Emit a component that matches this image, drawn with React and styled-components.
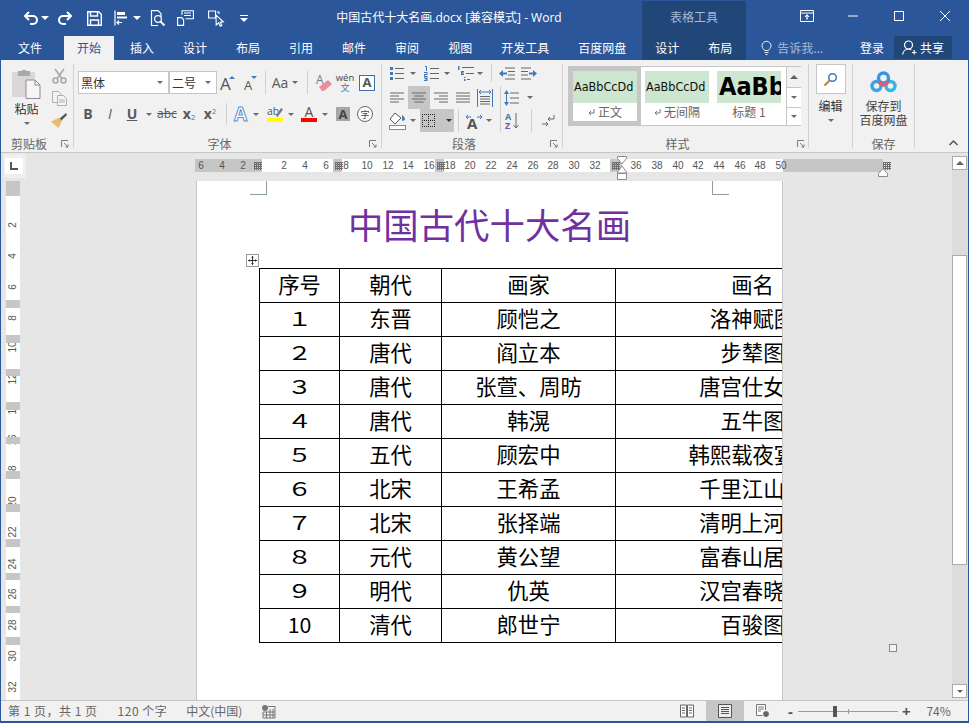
import React from "react";
import styled, { createGlobalStyle } from "styled-components";

const UI = `"Open Sans","Noto Sans CJK SC",sans-serif`;
const CJK = `"Noto Sans CJK SC","Noto Sans",sans-serif`;
const BLUE = "#2b579a";
const DARK = "#214779";
const GREY = "#444";
const ICON = "#5a5a5a";
const ACC = "#3f7ab8";

const Global = createGlobalStyle`
  html, body { margin: 0; padding: 0; background: ${BLUE}; }
  * { box-sizing: border-box; }
  svg { overflow: visible; }
`;

const Window = styled.div`
  width: 969px; height: 723px; display: flex; flex-direction: column; overflow: hidden;
  border-left: 1px solid ${BLUE}; border-right: 1px solid ${BLUE}; border-bottom: 2px solid ${BLUE};
  font-family: ${CJK}; color: ${GREY}; background: #e6e6e6;
`;
/* ---------- title bar ---------- */
const TitleBar = styled.header`
  height: 36px; background: ${BLUE}; display: grid; grid-template-columns: 641px 104px 1fr; color: #fff;
`;
const TitleLeft = styled.div`display: flex; align-items: center;`;
const Qat = styled.div`width: 255px; flex: none; display: flex; align-items: center; padding-left: 20px; height: 32px;`;
const QatItem = styled.span`
  width: ${p => p.$w}px; margin-left: ${p => p.$ml || 0}px; flex: none; display: flex; justify-content: center; align-items: center;
`;
const TitleText = styled.div`flex: 1; text-align: center; font: 12px/32px ${UI}; white-space: nowrap; color: #fff; height: 32px;`;
const ContextTitle = styled.div`
  margin-top: 1px; background: ${DARK}; color: #a6b8d3; font: 12px/31px ${CJK}; text-align: center;
`;
const WinButtons = styled.div`display: flex; justify-content: flex-end;`;
const WinButton = styled.span`width: 46px; height: 32px; display: flex; align-items: center; justify-content: center;`;
/* ---------- tabs ---------- */
const TabRow = styled.nav`height: 24px; background: ${BLUE}; display: flex; padding-left: 4px; color: #fff;`;
const Tab = styled.span`
  padding: 0 13px; margin-right: ${p => p.$mr ?? 3}px; font: 12px/23px ${CJK};
  color: ${p => (p.$active ? BLUE : "#fff")}; background: ${p => (p.$active ? "#f1f1f1" : "transparent")};
`;
const ContextTabs = styled.div`display: flex; background: ${DARK}; width: 104px; flex: none;`;
const CtxTab = styled(Tab)`margin-right: ${p => p.$mr || 0}px;`;
const Tell = styled.div`display: flex; align-items: center; gap: 5px; margin-left: 15px; font: 12px/24px ${CJK}; color: #a9bcd7;`;
const Login = styled.span`margin-left: auto; margin-right: 10px; font: 12px/23px ${CJK}; color: #fff;`;
const Share = styled.div`
  width: 58px; height: 23px; margin-right: 16px; background: ${DARK}; display: flex; align-items: center; gap: 3px;
  padding-left: 8px; font: 12px/23px ${CJK}; color: #fff;
`;
/* ---------- ribbon ---------- */
const Ribbon = styled.section`
  height: 93px; background: #f1f1f1; border-bottom: 1px solid #c6c6c6; padding: 4px 0; display: flex; flex: none;
`;
const Group = styled.div`
  width: ${p => p.$w}px; height: 84px; flex: none; border-right: 1px solid #d2d2d2; display: flex; flex-direction: column;
`;
const GroupBody = styled.div`height: 68px; flex: none;`;
const GroupLabel = styled.div`
  height: 16px; padding-top: 8px; display: grid; grid-template-columns: ${p => (p.$solo ? "1fr" : "1fr 16px")}; align-items: center;
  font: 12px/8px ${CJK}; color: #666; text-align: center;
`;
const LabelText = styled.span`white-space: nowrap;`;
const Launcher = styled.span`justify-self: end; margin-right: ${p => p.$mr ?? 4}px; display: flex;`;
const ClipBody = styled(GroupBody)`display: flex;`;
const PasteCol = styled.div`
  width: 49px; display: flex; flex-direction: column; align-items: center; padding: 4px 0 0 0; margin-left: 1px; font: 12px/16px ${CJK}; color: #333;
`;
const PasteText = styled.span`margin-top: 2px;`;
const PasteCaret = styled.span`margin-top: 5px; display: flex;`;
const ClipTools = styled.div`width: 18px; margin-left: -1px; display: flex; flex-direction: column; align-items: center; padding-top: 1px;`;
const ClipTool = styled.span`height: 24.5px; display: flex; align-items: center;`;
const FontBody = styled(GroupBody)`padding: 7px 0 0 4px; display: flex; flex-direction: column; gap: 9px;`;
const ParaBody = styled(GroupBody)`padding-left: 4px; display: flex; flex-direction: column;`;
const Row = styled.div`display: flex; align-items: stretch; height: ${p => p.$h}px; margin-top: ${p => p.$mt || 0}px;`;
const Tool = styled.span`
  width: ${p => p.$w}px; margin-left: ${p => p.$ml || 0}px; flex: none; display: flex; align-items: center; justify-content: center;
  background: ${p => (p.$on ? "#c6c6c6" : "transparent")};
`;
const Sep = styled.span`
  width: 1px; margin: 0 ${p => p.$mr || 0}px 0 ${p => p.$ml || 0}px; background: #cfcfcf; flex: none;
`;
const Caret = styled.i`
  display: block; width: 0; height: 0; border-left: 3.5px solid transparent; border-right: 3.5px solid transparent;
  border-top: 3.5px solid ${p => p.$c || "#6a6a6a"};
`;
const Combo = styled.div`
  width: ${p => p.$w}px; margin-left: ${p => p.$ml || 0}px; height: 23px; background: #fff; border: 1px solid #c6c6c6;
  display: flex; align-items: center; justify-content: space-between; padding: 0 5px 0 2px; font: 12px/21px ${CJK}; color: #333;
`;
const Letter = styled.span`
  font-family: ${UI}; font-size: ${p => p.$s || 14}px; line-height: 1; font-weight: ${p => (p.$b ? 700 : 400)};
  font-style: ${p => (p.$i ? "italic" : "normal")}; color: ${p => p.$c || ICON};
  text-decoration: ${p => p.$d || "none"};
`;
const Sub = styled.span`font-family: ${UI}; font-size: 8px; line-height: 1; color: ${ACC}; align-self: ${p => p.$a};`;
const Pair = styled.span`display: flex; align-items: center; height: 14px;`;
const BoxA = styled.span`
  width: 16px; height: 16px; border: 1px solid #3f6fa8; display: flex; align-items: center; justify-content: center;
  font: 700 13px/1 ${UI}; color: #555; background: #fff;
`;
const ShadedA = styled.span`
  width: 14px; height: 14px; background: #a6a6a6; display: flex; align-items: center; justify-content: center;
  font: 700 13px/1 ${UI}; color: #444;
`;
const Circled = styled.span`
  width: 16px; height: 16px; border-radius: 50%; border: 1px solid #666; display: flex; align-items: center; justify-content: center;
  font: 9px/1 ${CJK}; color: #444; background: #fff;
`;
const WenStack = styled.span`display: flex; flex-direction: column; align-items: center; font-family: ${UI}; line-height: 1;`;
const WenTop = styled.span`font-size: 9.5px; line-height: 10px; color: #444;`;
const WenBottom = styled.span`font: 9px/9px ${CJK}; color: ${ACC};`;
const BarA = styled.span`display: flex; flex-direction: column; align-items: center; font: 400 14px/12px ${UI}; color: #555;`;
const ColorBar = styled.span`width: 16px; height: 4px; background: ${p => p.$c};`;
const StyleBody = styled(GroupBody)`padding: 2px 0 0 5px;`;
const Gallery = styled.div`
  width: 233px; height: 60px; border: 1px solid #c6c6c6; background: #fff; display: flex;
`;
const StyleItem = styled.div`
  width: 72px; height: 58px; padding: 4px 4px 0; display: flex; flex-direction: column; flex: none;
  outline: ${p => (p.$on ? "4px solid #c6c6c6" : "none")}; outline-offset: -4px;
`;
const Swatch = styled.div`
  height: 32px; background: #cde6d0; overflow: hidden; white-space: nowrap; padding-left: ${p => (p.$big ? 2 : 1)}px;
  font: ${p => (p.$big ? "700 25px/32px" : "400 12.5px/32px")} "DejaVu Sans Condensed","Noto Sans",sans-serif; color: ${p => (p.$big ? "#000" : "#111")};
`;
const StyleCap = styled.div`
  display: flex; justify-content: center; align-items: center; gap: 3px; font: 12px/18px ${CJK}; color: #666; white-space: nowrap;
`;
const GalleryScroll = styled.div`width: 15px; margin-left: 1px; display: flex; flex-direction: column; flex: none;`;
const ScrollStep = styled.span`
  height: ${p => p.$h}px; border-left: 1px solid #c6c6c6; border-bottom: ${p => (p.$last ? "none" : "1px solid #c6c6c6")};
  background: ${p => p.$bg || "#fff"}; display: flex; align-items: center; justify-content: center;
`;
const EditBody = styled(GroupBody)`display: flex; flex-direction: column; align-items: center; font: 12px/16px ${CJK}; color: #333;`;
const EditBtn = styled.span`
  width: 30px; height: 30px; background: #fff; border: 1px solid #c6c6c6; display: flex; align-items: center; justify-content: center; margin-bottom: 4px;
`;
const EditCaret = styled.span`margin-top: 5px;`;
const SaveBody = styled(GroupBody)`
  display: flex; flex-direction: column; align-items: center; padding-top: 7px; font: 12px/14px ${CJK}; color: #444; text-align: center;
`;
const SaveText = styled.span`margin-top: 6px;`;
const Collapse = styled.div`flex: 1; display: flex; justify-content: flex-end; align-items: flex-end; padding: 0 10px 2px 0;`;
/* ---------- workspace ---------- */
const Workspace = styled.main`height: 547px; flex: none; display: flex;`;
const Rail = styled.aside`width: 25px; flex: none; display: flex; flex-direction: column;`;
const Corner = styled.div`
  width: 22px; height: 24px; margin: 1px 0 3px 3px; background: #efefef; padding: 4px 3px 4px 1px;
`;
const CornerBtn = styled.div`
  width: 18px; height: 16px; background: #fff; display: flex; align-items: center; justify-content: center;
`;
const VRuler = styled.div`
  width: 14px; height: 519px; margin-left: 5px; background: #fff; position: relative; overflow: hidden;
`;
const VBand = styled.div`position: absolute; left: 0; width: 14px; height: 7px; background: #c6c6c6;`;
const VLabel = styled.span`
  position: absolute; left: 7px; font: 10px/10px "Liberation Sans",sans-serif; color: #555; transform: translate(-50%,-50%) rotate(-90deg); white-space: nowrap;
`;
const Center = styled.div`flex: 1; min-width: 0; display: flex; flex-direction: column;`;
const RulerRow = styled.div`height: 28px; flex: none; padding: 6px 0 0 169px;`;
const HRuler = styled.div`width: 688px; height: 13px; background: #fff; position: relative;`;
const HBand = styled.div`position: absolute; top: 0; height: 13px; background: #c6c6c6;`;
const HTick = styled.span`
  position: absolute; top: 1px; font: 10px/11px "Liberation Sans",sans-serif; color: #555; transform: translateX(-50%);
`;
const GridMark = styled.svg`position: absolute; top: 3px;`;
const Stops = styled.svg`position: absolute; top: -3px;`;
const Doc = styled.div`flex: 1; position: relative; padding-left: 170px; min-height: 0; overflow: hidden;`;
const Page = styled.article`
  width: 587px; height: 100%; background: #fff; border-left: 1px solid #c6c6c6; border-right: 1px solid #c6c6c6; overflow: hidden;
`;
const CropRow = styled.div`height: 14px; display: flex; justify-content: space-between; padding: 0 53px;`;
const Crop = styled.span`
  width: 17px; height: 14px; border-bottom: 1px solid #8ea193;
  border-${p => p.$side}: 1px solid #8ea193;
`;
const DocTitle = styled.h1`
  margin: 4px 0 0; height: 50px; font: 400 35.4px/50px ${CJK}; color: #7030a0; text-align: center; white-space: nowrap;
`;
const TableWrap = styled.div`position: relative; margin: 19px 0 0 62px; width: 630px;`;
const MoveHandle = styled.span`
  position: absolute; left: -13px; top: -14px; width: 13px; height: 13px; border: 1px solid #9a9a9a; background: #fff;
  display: flex; align-items: center; justify-content: center;
`;
const DataTable = styled.table`
  border-collapse: collapse; table-layout: fixed; width: 630px; font: 21.33px/24px ${CJK}; color: #000;
`;
const Cell = styled.td`
  border: 1px solid #000; height: 34px; padding: 0 0 4px; text-align: center; white-space: nowrap; overflow: hidden;
`;
const Digit = styled.span`display: inline-block; transform: scale(1.18, 0.88);`;
const ResizeHandle = styled.span`
  position: absolute; left: 863px; top: 463px; width: 8px; height: 8px; border: 1px solid #8a8a8a; background: #f4f4f4;
`;
const Scrollbar = styled.aside`width: 17px; flex: none; padding: 3px 0 2px 1px;`;
const Track = styled.div`width: 16px; height: 100%; background: #dcdcdc; display: flex; flex-direction: column;`;
const ScrollBtn = styled.span`
  width: 15px; height: 14px; flex: none; background: #fff; border: 1px solid #ababab; display: flex; align-items: center; justify-content: center;
`;
const Thumb = styled.div`width: 15px; height: 310px; margin-top: 85px; background: #fff; border: 1px solid #ababab; margin-bottom: auto;`;
const UpCaret = styled.i`
  display: block; width: 0; height: 0; border-left: 4px solid transparent; border-right: 4px solid transparent; border-bottom: 4px solid #606060;
`;
/* ---------- status bar ---------- */
const Status = styled.footer`
  height: 21px; flex: none; background: #f1f1f1; border-top: 1px solid #c6c6c6; display: flex; align-items: center; font: 12px/20px ${CJK}; color: #666;
`;
const StatusText = styled.span`margin-left: ${p => p.$ml}px; white-space: nowrap; letter-spacing: ${p => p.$ls || 0}px;`;
const StatusIcon = styled.span`margin-left: ${p => p.$ml}px; display: flex;`;
const ViewBtn = styled.span`
  width: ${p => p.$w}px; height: 20px; margin-left: ${p => p.$ml || 0}px; display: flex; align-items: center; justify-content: center;
  background: ${p => (p.$on ? "#c6c6c6" : "transparent")};
`;
const Zoom = styled.div`display: flex; align-items: center; margin-left: ${p => p.$ml}px;`;
const ZoomSign = styled.span`font: 700 15px/15px ${UI}; color: #555; width: 10px; text-align: center;`;
const Slider = styled.div`
  width: 100px; height: 1px; margin: 0 3px; background: #9a9a9a; position: relative;
`;
const SliderThumb = styled.i`position: absolute; left: 35px; top: -5px; width: 4px; height: 11px; background: #555;`;
const SliderMid = styled.i`position: absolute; left: 50px; top: -2px; width: 1px; height: 5px; background: #9a9a9a;`;

/* ---------- icons ---------- */
const W = { fill: "none", stroke: "#fff", strokeWidth: 1.6 };
const Undo = ({ flip }) => (
  <svg width="16" height="14" viewBox="0 0 16 14" {...W} strokeWidth="2" style={flip ? { transform: "scaleX(-1)" } : undefined}>
    <path d="M6 1 2 5l4 4M2 5h8a3.6 3.6 0 0 1 0 8H7" />
  </svg>
);
const SaveIc = () => (
  <svg width="15" height="15" viewBox="0 0 15 15" {...W} strokeWidth="1.4">
    <path d="M.7.7h11l2.6 2.6v11H.7z" /><path d="M3.5 1v4h7V1M3.5 14V9h8v5" />
  </svg>
);
const TouchIc = () => (
  <svg width="14" height="16" viewBox="0 0 14 16" {...W} strokeWidth="1.2">
    <path d="M1 .5v15" /><path fill="#fff" stroke="none" d="M3 2h8v3H3zM3 6.5h10v2H3z" /><path d="M8 12.5H3m2-2-2 2 2 2" />
  </svg>
);
const PreviewIc = () => (
  <svg width="16" height="17" viewBox="0 0 16 17" {...W} strokeWidth="1.2">
    <path d="M8 15.5H1.5V.7h6.5l3 3v3" /><circle cx="8" cy="9" r="3.4" /><path d="m10.5 11.5 4 4" strokeWidth="1.8" />
  </svg>
);
const NewIc = () => (
  <svg width="17" height="16" viewBox="0 0 17 16" {...W} strokeWidth="1.1">
    <path d="M.6 7.6h4l2 2v5.8h-6z" /><path d="M5 5V.7h11.4v8H8.6" /><path d="M7 3h7M7 5.5h7" />
  </svg>
);
const PointerIc = () => (
  <svg width="17" height="17" viewBox="0 0 17 17" {...W} strokeWidth="1.1">
    <path d="M.6 1h7v7h-7zM9 2h2v2" /><path fill={BLUE} d="m8 5 .2 10 2.4-2.2 1.6 3.4 1.6-.7-1.6-3.4 3.1-.3z" />
  </svg>
);
const CustomIc = () => (
  <svg width="8" height="8" viewBox="0 0 8 8"><path d="M0 1h8v1H0z" fill="#fff" /><path d="M0 4h8L4 8z" fill="#fff" /></svg>
);
const ChromeDown = () => <svg width="8" height="5" viewBox="0 0 8 5"><path d="M0 0h8L4 4z" fill="#fff" /></svg>;
const RibbonDisp = () => (
  <svg width="14" height="12" viewBox="0 0 14 12" {...W} strokeWidth="1"><path d="M.5.5h13v11H.5zM.5 3h13" /><path fill="#fff" stroke="none" d="M7 4 4.5 7h5zM6.3 6.5h1.4v3H6.3z" /></svg>
);
const MinIc = () => <svg width="10" height="10" viewBox="0 0 10 10"><path d="M0 5h10" stroke="#fff" /></svg>;
const MaxIc = () => <svg width="10" height="10" viewBox="0 0 10 10"><path d="M.5.5h9v9h-9z" stroke="#fff" fill="none" /></svg>;
const CloseIc = () => <svg width="10" height="10" viewBox="0 0 10 10"><path d="m0 0 10 10M10 0 0 10" stroke="#fff" /></svg>;
const Bulb = () => (
  <svg width="11" height="14" viewBox="0 0 11 14" fill="none" stroke="#e8edf4"><path d="M3.5 9.5C2.8 8 1 7 1 4.8a4.5 4.5 0 0 1 9 0C10 7 8.2 8 7.5 9.5zM3.5 11.5h4M4.5 13.5h2" /></svg>
);
const Person = () => (
  <svg width="15" height="15" viewBox="0 0 15 15" fill="none" stroke="#fff" strokeWidth="1.2"><circle cx="6.5" cy="5" r="4" /><path d="M.7 14.5c.3-3 2.7-5.5 5.8-5.5 1 0 2 .3 2.8.7M10 12.5h4.5M12.2 10v4.5" /></svg>
);
const Launch = () => (
  <svg width="8" height="8" viewBox="0 0 8 8" fill="none" stroke="#7a7a7a"><path d="M.5 7V.5H7" /><path d="m3 3 4 4M7 4.5V7H4.5" /></svg>
);
const PasteIc = () => (
  <svg width="29" height="31" viewBox="0 0 29 31">
    <rect x="0" y="4" width="23" height="25" rx="1" fill="#d9d5d9" />
    <path d="M6 8V3h3.5a3 3 0 0 1 5 0H18v5z" fill="#a8a8a8" />
    <path d="M14 12h9l5 5v13.5H14z" fill="#f6f4f6" stroke="#8e8e8e" /><path d="M23 12v5h5" fill="none" stroke="#8e8e8e" />
  </svg>
);
const CutIc = () => (
  <svg width="15" height="16" viewBox="0 0 15 16" fill="none" stroke="#a6a6a6" strokeWidth="1.5"><path d="m3 1 6.5 9M12 1 5.5 10" /><circle cx="3.5" cy="12.5" r="2.5" /><circle cx="11.5" cy="12.5" r="2.5" /></svg>
);
const CopyIc = () => (
  <svg width="15" height="15" viewBox="0 0 15 15" fill="#f4f4f4" stroke="#b0b0b0"><path d="M.5.5h6l2 2v9h-8z" /><path d="M5.5 4.5h6l3 3v7h-9z" /><path d="M7 9h6M7 11h6" /></svg>
);
const BrushIc = () => (
  <svg width="16" height="15" viewBox="0 0 16 15"><path d="M15 0l1 2-6 6-2-2z" fill="#555" /><path d="M8 4.5 11 8l-3.500 7L0 8.800z" fill="#e9bb73" /></svg>
);
const Grow = ({ small }) => (
  <svg width="18" height="18" viewBox="0 0 18 18">
    <text x={small ? 3 : 1} y="16" fontFamily="Open Sans" fontSize={small ? 13 : 17} fill="#555">A</text>
    <path d={small ? "M10 2h6l-3 3z" : "M10 5l3-3 3 3z"} fill={ACC} />
  </svg>
);
const Eraser = () => (
  <svg width="16" height="18" viewBox="0 0 16 18">
    <text x="0" y="10" fontFamily="Open Sans" fontSize="12" fill="#777">A</text>
    <path d="M3 13l9-7 4 4-8 7H6z" fill="#ea8d9b" />
  </svg>
);
const EffectA = () => (
  <svg width="18" height="18" viewBox="0 0 18 18">
    <text x="1" y="16" fontFamily="Open Sans" fontWeight="700" fontSize="19" fill="#fff" stroke="#5a93cd" strokeWidth="1">A</text>
  </svg>
);
const Highlight = () => (
  <svg width="16" height="18" viewBox="0 0 16 18">
    <text x="0" y="10" fontFamily="Open Sans" fontSize="10.5" fill="#555">ab</text>
    <path d="M9 11 14 3l2 1.5L10.500 12z" fill="#7a7a7a" /><rect y="13" width="16" height="4" fill="#ffff00" />
  </svg>
);
const Lines = ({ kind }) => {
  const d = {
    left: "M0 1h14M0 4h9M0 7h14M0 10h9",
    center: "M0 1h14M2.5 4h9M0 7h14M2.5 10h9",
    right: "M0 1h14M5 4h9M0 7h14M5 10h9",
    just: "M0 1h14M0 4h14M0 7h14M0 10h14",
  }[kind];
  return <svg width="14" height="11" viewBox="0 0 14 11" fill="none" stroke="#666"><path d={d} /></svg>;
};
const Bullets = () => (
  <svg width="14" height="13" viewBox="0 0 14 13"><path d="M5 1.5h9M5 6.5h9M5 11.5h9" stroke="#666" /><path d="M0 0h3v3H0zM0 5h3v3H0zM0 10h3v3H0z" fill={ACC} /></svg>
);
const Numbered = () => (
  <svg width="15" height="15" viewBox="0 0 15 15">
    <path d="M6 2.5h9M6 7.5h9M6 12.5h9" stroke="#666" />
    <path d="M1 0h2v5H2V1H1zM0 6h3.5v3H1v1h2.500v1H0V8h2.500V7H0zM0 11.500h3.500V15H0v-1h2.500v-.5H1v-1h1.500V12.500H0z" fill={ACC} />
  </svg>
);
const Multi = () => (
  <svg width="17" height="15" viewBox="0 0 17 15">
    <path d="M5 1.5h12M9 7.5h8M10 13.5h3" stroke="#666" />
    <path d="M1 0h1.500v4H1zM4 5h3v1.500H5.500v1H7V9H4zM7 11h1.500v1H7zM7 13h1.500v2H7z" fill={ACC} />
  </svg>
);
const Indent = ({ out }) => (
  <svg width="16" height="13" viewBox="0 0 16 13" style={out ? undefined : { transform: "scaleX(-1)" }}>
    <path d="M6 1h10M9 4.500h7M9 8h7M6 12h10" stroke="#666" />
    <path d="M0 6.500 4 3v2.500h4v2H4V10z" fill={ACC} />
  </svg>
);
const Distrib = () => (
  <svg width="16" height="18" viewBox="0 0 16 18">
    <path d="M.5 0v18M15.5 0v18" stroke={ACC} /><path d="M2 3h12M2 3l2-2M2 3l2 2M14 3l-2-2M14 3l-2 2" stroke={ACC} fill="none" />
    <path d="M3 7.5h10M3 10h10M3 12.5h10M3 15h10" stroke="#666" />
  </svg>
);
const LineSp = () => (
  <svg width="15" height="16" viewBox="0 0 15 16"><path d="M6 3h9M6 8h9M6 13h9" stroke="#666" /><path d="M2.5 2v12" stroke={ACC} /><path d="M0 4l2.500-4L5 4zM0 12h5l-2.500 4z" fill={ACC} /></svg>
);
const Bucket = () => (
  <svg width="17" height="18" viewBox="0 0 17 18">
    <path d="M6 1 1 7l5 5 6-6z" fill="#fff" stroke="#555" /><path d="M13 3c2 1 3 3 3 5l-3 1z" fill={ACC} />
    <rect x=".5" y="13.5" width="16" height="4" fill="#fff" stroke="#8a8a8a" />
  </svg>
);
const Borders = () => (
  <svg width="13" height="13" viewBox="0 0 13 13" fill="none" stroke="#222" strokeDasharray="1 1" shapeRendering="crispEdges"><path d="M0 .5h13M0 12.5h13M0 6.5h13M.5 0v13M6.5 0v13M12.5 0v13" /></svg>
);
const DirIc = () => (
  <svg width="20" height="16" viewBox="0 0 20 16">
    <text x="3" y="16" fontFamily="Open Sans" fontSize="15" fontWeight="700" fill="#555">A</text>
    <path d="M2 4h5M2 4l2-2M2 4l2 2" stroke={ACC} fill="none" /><path d="M18 4h-5M18 4l-2-2M18 4l-2 2" stroke={ACC} fill="none" />
  </svg>
);
const SortIc = () => (
  <svg width="14" height="18" viewBox="0 0 14 18">
    <text x="0" y="8" fontFamily="Open Sans" fontSize="9" fontWeight="700" fill={ACC}>A</text>
    <text x="0" y="17" fontFamily="Open Sans" fontSize="9" fontWeight="700" fill="#8a4bb0">Z</text>
    <path d="M11 1v15M8.5 13l2.500 3 2.500-3" stroke="#666" fill="none" />
  </svg>
);
const MarkIc = () => (
  <svg width="14" height="14" viewBox="0 0 14 14" fill="none" stroke="#666"><path d="M13 1v4H7M9 3 7 5l2 2M1 10h6M5 8l2 2-2 2" /></svg>
);
const Return = () => <svg width="7" height="7" viewBox="0 0 7 7" fill="none" stroke="#777"><path d="M6 0v4H1M3 2 1 4l2 2" /></svg>;
const Mag = () => (
  <svg width="15" height="15" viewBox="0 0 15 15" fill="none"><circle cx="9.5" cy="5.5" r="3.8" stroke={ACC} strokeWidth="1.5" /><path d="M6.5 8.5 1.5 13.5" stroke="#b5813a" strokeWidth="2" /></svg>
);
const BaiduIc = () => (
  <svg width="27" height="22" viewBox="0 0 27 22" fill="none" strokeWidth="3.4">
    <circle cx="6.5" cy="15" r="4.5" stroke="#38a4e8" /><circle cx="20.5" cy="15" r="4.5" stroke="#35b5e0" />
    <circle cx="13.5" cy="7" r="5" stroke="#3a94e4" /><path d="M9.5 10c1 3 2.500 4 4 4s3-1 4-4" stroke="#ef5568" />
  </svg>
);
const LCorner = () => <svg width="8" height="8" viewBox="0 0 8 8" fill="none" stroke="#555" strokeWidth="2"><path d="M1 0v7h7" /></svg>;
const GridGlyph = ({ style }) => (
  <GridMark width="8" height="8" viewBox="0 0 8 8" style={style} stroke="#6e6e6e" strokeWidth="1" fill="none" shapeRendering="crispEdges">
    <path d="M0 .5h8M0 2.500h8M0 4.500h8M0 6.500h8M.5 0v8M2.500 0v8M4.500 0v8M6.500 0v8" />
  </GridMark>
);
const MoveIc = () => (
  <svg width="9" height="9" viewBox="0 0 9 9" fill="none" stroke="#333"><path d="M4.5 0v9M0 4.500h9M3.500 1.500l1-1 1 1M3.500 7.500l1 1 1-1M1.500 3.500l-1 1 1 1M7.500 3.500l1 1-1 1" /></svg>
);
const BookIc = () => (
  <svg width="14" height="14" viewBox="0 0 14 14" fill="#fff" stroke="#666"><path d="M.5 1h6v12h-6zM7.500 1h6v12h-6z" /><path d="M2 4h3M2 6.500h3M2 9h3M9 4h3M9 6.500h3M9 9h3" /></svg>
);
const PrintIc = () => (
  <svg width="14" height="14" viewBox="0 0 14 14" fill="#eee" stroke="#555"><path d="M.5.5h13v13H.5z" /><path d="M3 3.500h8M3 5.500h8M3 7.500h8M3 9.500h8" /></svg>
);
const WebIc = () => (
  <svg width="14" height="14" viewBox="0 0 14 14" fill="#fff" stroke="#777"><path d="M.5.5h9v11h-9z" /><path d="M2 3h6M2 5h6M2 7h3" /><circle cx="10" cy="10" r="3.5" fill="#666" stroke="#fff" /></svg>
);
const MacroIc = () => (
  <svg width="13" height="13" viewBox="0 0 13 13"><circle cx="3" cy="3" r="3" fill="#777" /><path d="M6 1.500h7V13H1V7h12M1 10h12M4.500 7v6M8 4v9M11 4v9" stroke="#777" fill="none" /></svg>
);

/* ---------- data ---------- */
const rows = [
  ["序号", "朝代", "画家", "画名"],
  ["１", "东晋", "顾恺之", "洛神赋图"],
  ["２", "唐代", "阎立本", "步辇图"],
  ["３", "唐代", "张萱、周昉", "唐宫仕女图"],
  ["４", "唐代", "韩滉", "五牛图"],
  ["５", "五代", "顾宏中", "韩熙载夜宴图"],
  ["６", "北宋", "王希孟", "千里江山图"],
  ["７", "北宋", "张择端", "清明上河图"],
  ["８", "元代", "黄公望", "富春山居图"],
  ["９", "明代", "仇英", "汉宫春晓图"],
  ["10", "清代", "郎世宁", "百骏图"],
];
const colWidths = [80, 102, 174, 274];
const hTicks = [[201, 6], [222, 4], [243, 2], [284, 2], [305, 4], [326, 6], [346, 8], [367, 10], [388, 12], [408, 14], [429, 16], [450, 18], [470, 20], [491, 22], [512, 24], [533, 26], [553, 28], [574, 30], [595, 32], [636, 36], [657, 38], [678, 40], [698, 42], [719, 44], [740, 46], [760, 48], [781, 50]];
const hBands = [[0, 67], [138, 9], [240, 9], [415, 12], [588, 100]];
const hGrid = [59, 140, 242, 417, 688];
const vTicks = [[225, 2], [256, 4], [287, 6], [318, 8], [347, 10], [379, 12], [409, 14], [440, 16], [471, 18], [502, 20], [532, 22], [564, 24], [594, 26], [625, 28], [656, 30], [687, 32]];
const vBands = [[181, 15], [300, 8], [335, 8], [369, 7], [402, 8], [437, 7], [471, 8], [504, 8], [539, 8], [573, 7], [606, 7], [637, 8]];
const tabs = ["插入", "设计", "布局", "引用", "邮件", "审阅", "视图", "开发工具", "百度网盘"];

const Arrow = ({ w = 10, ml }) => <Tool $w={w} $ml={ml}><Caret /></Tool>;
const isWide = c => /^[１-９]$/.test(c);

export default function App() {
  return (
    <>
      <Global />
      <Window>
        <TitleBar>
          <TitleLeft>
            <Qat>
              <QatItem $w={20}><Undo /></QatItem>
              <QatItem $w={8}><ChromeDown /></QatItem>
              <QatItem $w={20} $ml={6}><Undo flip /></QatItem>
              <QatItem $w={20} $ml={9}><SaveIc /></QatItem>
              <QatItem $w={20} $ml={7}><TouchIc /></QatItem>
              <QatItem $w={8} $ml={2}><ChromeDown /></QatItem>
              <QatItem $w={20} $ml={7}><PreviewIc /></QatItem>
              <QatItem $w={20} $ml={7}><NewIc /></QatItem>
              <QatItem $w={20} $ml={11}><PointerIc /></QatItem>
              <QatItem $w={10} $ml={13}><CustomIc /></QatItem>
            </Qat>
            <TitleText>中国古代十大名画.docx [兼容模式] - Word</TitleText>
          </TitleLeft>
          <ContextTitle>表格工具</ContextTitle>
          <WinButtons>
            <WinButton><RibbonDisp /></WinButton>
            <WinButton><MinIc /></WinButton>
            <WinButton><MaxIc /></WinButton>
            <WinButton><CloseIc /></WinButton>
          </WinButtons>
        </TitleBar>

        <TabRow>
          <Tab $mr={9}>文件</Tab>
          <Tab $active>开始</Tab>
          {tabs.map(t => <Tab key={t}>{t}</Tab>)}
          <ContextTabs>
            <CtxTab $mr={3}>设计</CtxTab>
            <CtxTab>布局</CtxTab>
          </ContextTabs>
          <Tell><Bulb />告诉我...</Tell>
          <Login>登录</Login>
          <Share><Person />共享</Share>
        </TabRow>

        <Ribbon>
          <Group $w={73}>
            <ClipBody>
              <PasteCol>
                <PasteIc />
                <PasteText>粘贴</PasteText>
                <PasteCaret><Caret /></PasteCaret>
              </PasteCol>
              <ClipTools>
                <ClipTool><CutIc /></ClipTool>
                <ClipTool><CopyIc /></ClipTool>
                <ClipTool><BrushIc /></ClipTool>
              </ClipTools>
            </ClipBody>
            <GroupLabel><LabelText>剪贴板</LabelText><Launcher><Launch /></Launcher></GroupLabel>
          </Group>

          <Group $w={308}>
            <FontBody>
              <Row $h={23}>
                <Combo $w={91}>黑体<Caret /></Combo>
                <Combo $w={48}>二号<Caret /></Combo>
                <Tool $w={22}><Grow /></Tool>
                <Tool $w={22}><Grow small /></Tool>
                <Sep $ml={4} $mr={4} />
                <Tool $w={20}><Letter>Aa</Letter></Tool>
                <Arrow />
                <Sep $ml={7} $mr={5} />
                <Tool $w={22}><Eraser /></Tool>
                <Tool $w={20}><WenStack><WenTop>wén</WenTop><WenBottom>文</WenBottom></WenStack></Tool>
                <Tool $w={22} $ml={1}><BoxA>A</BoxA></Tool>
              </Row>
              <Row $h={22}>
                <Tool $w={20}><Letter $b>B</Letter></Tool>
                <Tool $w={22} $ml={1}><Letter $i>I</Letter></Tool>
                <Tool $w={22}><Letter $b $d="underline">U</Letter></Tool>
                <Arrow ml={1} />
                <Tool $w={22} $ml={2}><Letter $s={12} $d="line-through">abc</Letter></Tool>
                <Tool $w={22}><Pair><Letter $b>x</Letter><Sub $a="flex-end">2</Sub></Pair></Tool>
                <Tool $w={20}><Pair><Letter $b>x</Letter><Sub $a="flex-start">2</Sub></Pair></Tool>
                <Sep $ml={6} $mr={5} />
                <Tool $w={20}><EffectA /></Tool>
                <Arrow w={8} />
                <Tool $w={22} $ml={4}><Highlight /></Tool>
                <Arrow />
                <Tool $w={22} $ml={2}><BarA>A<ColorBar $c="#ff0000" /></BarA></Tool>
                <Arrow />
                <Tool $w={22} $ml={2}><ShadedA>A</ShadedA></Tool>
                <Tool $w={22}><Circled>字</Circled></Tool>
              </Row>
            </FontBody>
            <GroupLabel><LabelText>字体</LabelText><Launcher><Launch /></Launcher></GroupLabel>
          </Group>

          <Group $w={181}>
            <ParaBody>
              <Row $h={18}>
                <Tool $w={22}><Bullets /></Tool>
                <Arrow />
                <Tool $w={22} $ml={2}><Numbered /></Tool>
                <Arrow />
                <Tool $w={22} $ml={2}><Multi /></Tool>
                <Arrow w={8} />
                <Sep $ml={7} $mr={4} />
                <Tool $w={22}><Indent out /></Tool>
                <Tool $w={22}><Indent /></Tool>
              </Row>
              <Row $h={23} $mt={4}>
                <Tool $w={22}><Lines kind="left" /></Tool>
                <Tool $w={22} $on><Lines kind="center" /></Tool>
                <Tool $w={22}><Lines kind="right" /></Tool>
                <Tool $w={22}><Lines kind="just" /></Tool>
                <Tool $w={22}><Distrib /></Tool>
                <Sep $ml={4} />
                <Tool $w={20}><LineSp /></Tool>
                <Arrow ml={4} />
              </Row>
              <Row $h={23}>
                <Tool $w={22}><Bucket /></Tool>
                <Arrow />
                <Tool $w={34} $ml={2} $on><Borders />&nbsp;&nbsp;&nbsp;<Caret $c="#333" /></Tool>
                <Sep $ml={4} />
                <Tool $w={22} $ml={4}><DirIc /></Tool>
                <Arrow w={8} />
                <Sep $ml={7} />
                <Tool $w={22}><SortIc /></Tool>
                <Sep $ml={8} />
                <Tool $w={22} $ml={5}><MarkIc /></Tool>
              </Row>
            </ParaBody>
            <GroupLabel><LabelText>段落</LabelText><Launcher><Launch /></Launcher></GroupLabel>
          </Group>

          <Group $w={246}>
            <StyleBody>
              <Gallery>
                <StyleItem $on>
                  <Swatch>AaBbCcDd</Swatch>
                  <StyleCap><Return />正文</StyleCap>
                </StyleItem>
                <StyleItem>
                  <Swatch>AaBbCcDd</Swatch>
                  <StyleCap><Return />无间隔</StyleCap>
                </StyleItem>
                <StyleItem>
                  <Swatch $big>AaBb</Swatch>
                  <StyleCap>标题 1</StyleCap>
                </StyleItem>
                <GalleryScroll>
                  <ScrollStep $h={21} $bg="#f1f1f1"><UpCaret /></ScrollStep>
                  <ScrollStep $h={20}><Caret /></ScrollStep>
                  <ScrollStep $h={17} $last><Caret /></ScrollStep>
                </GalleryScroll>
              </Gallery>
            </StyleBody>
            <GroupLabel><LabelText>样式</LabelText><Launcher $mr={3}><Launch /></Launcher></GroupLabel>
          </Group>

          <Group $w={44}>
            <EditBody>
              <EditBtn><Mag /></EditBtn>
              编辑
              <EditCaret><Caret /></EditCaret>
            </EditBody>
          </Group>

          <Group $w={62}>
            <SaveBody>
              <BaiduIc />
              <SaveText>保存到<br />百度网盘</SaveText>
            </SaveBody>
            <GroupLabel $solo><LabelText>保存</LabelText></GroupLabel>
          </Group>

          <Collapse>
            <svg width="9" height="6" viewBox="0 0 9 6" fill="none" stroke="#555" strokeWidth="1.5"><path d="m.5 5 4-4 4 4" /></svg>
          </Collapse>
        </Ribbon>

        <Workspace>
          <Rail>
            <Corner><CornerBtn><LCorner /></CornerBtn></Corner>
            <VRuler>
              {vTicks.map(([y, n]) => <VLabel key={n} style={{ top: y - 181 }}>{n}</VLabel>)}
              {vBands.map(([y, h]) => <VBand key={y} style={{ top: y - 181, height: h }} />)}
            </VRuler>
          </Rail>
          <Center>
            <RulerRow>
              <HRuler>
                {hBands.map(([x, w]) => <HBand key={x} style={{ left: x, width: w }} />)}
                {hTicks.map(([x, n]) => <HTick key={x} style={{ left: x - 195 }}>{n}</HTick>)}
                {hGrid.map(x => <GridGlyph key={x} style={{ left: x }} />)}
                <Stops width="12" height="25" viewBox="0 0 12 25" style={{ left: 421 }} fill="#fff" stroke="#8a8a8a">
                  <path d="M1.5.5h9v2L6 8 1.5 2.5zM6 10l4.5 6v1h-9v-1z" /><path d="M1.5 17.5h9v6h-9z" />
                </Stops>
                <Stops width="10" height="9" viewBox="0 0 10 9" style={{ left: 683, top: 9 }} fill="#fff" stroke="#8a8a8a">
                  <path d="M.5 8.5v-3L5 .5l4.5 5v3z" />
                </Stops>
              </HRuler>
            </RulerRow>
            <Doc>
              <Page>
                <CropRow><Crop $side="right" /><Crop $side="left" /></CropRow>
                <DocTitle>中国古代十大名画</DocTitle>
                <TableWrap>
                  <MoveHandle><MoveIc /></MoveHandle>
                  <DataTable>
                    <colgroup>{colWidths.map((w, i) => <col key={i} width={w} />)}</colgroup>
                    <tbody>
                      {rows.map(r => (
                        <tr key={r[0]}>{r.map((c, i) => <Cell key={i}>{isWide(c) ? <Digit>{c}</Digit> : c}</Cell>)}</tr>
                      ))}
                    </tbody>
                  </DataTable>
                </TableWrap>
              </Page>
              <ResizeHandle />
            </Doc>
          </Center>
          <Scrollbar>
            <Track>
              <ScrollBtn><UpCaret /></ScrollBtn>
              <Thumb />
              <ScrollBtn><Caret $c="#606060" /></ScrollBtn>
            </Track>
          </Scrollbar>
        </Workspace>

        <Status>
          <StatusText $ml={7} $ls={0.5}>第 1 页，共 1 页</StatusText>
          <StatusText $ml={20} $ls={0.5}>120 个字</StatusText>
          <StatusText $ml={19}>中文(中国)</StatusText>
          <StatusIcon $ml={20}><MacroIc /></StatusIcon>
          <ViewBtn $w={38} $ml={393}><BookIc /></ViewBtn>
          <ViewBtn $w={38} $on><PrintIc /></ViewBtn>
          <ViewBtn $w={38}><WebIc /></ViewBtn>
          <Zoom $ml={3}>
            <ZoomSign>-</ZoomSign>
            <Slider><SliderThumb /><SliderMid /></Slider>
            <ZoomSign>+</ZoomSign>
          </Zoom>
          <StatusText $ml={15}>74%</StatusText>
        </Status>
      </Window>
    </>
  );
}
